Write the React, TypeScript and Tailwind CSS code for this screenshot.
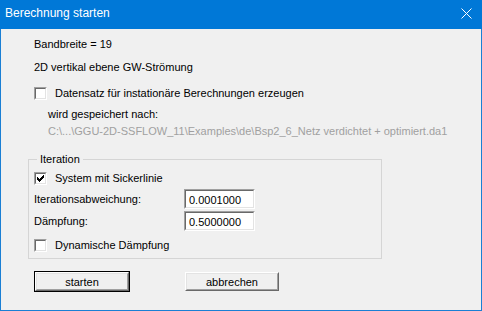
function CheckBox({ checked = false }: { checked?: boolean }) {
  return (
    <div className="w-[13px] h-[13px] shrink-0 border border-t-[#a0a0a0] border-l-[#a0a0a0] border-b-white border-r-white">
      <div className="w-full h-full border border-t-[#696969] border-l-[#696969] border-b-[#e3e3e3] border-r-[#e3e3e3] bg-white flex items-center justify-center">
        {checked && (
          <svg width="7" height="7" viewBox="0 0 7 7" shapeRendering="crispEdges">
            <path d="M0 2h1v3H0zM1 3h1v3H1zM2 4h1v3H2zM3 3h1v3H3zM4 2h1v3H4zM5 1h1v3H5zM6 0h1v3H6z" fill="#000" />
          </svg>
        )}
      </div>
    </div>
  );
}

function NumField({ value }: { value: string }) {
  return (
    <div className="w-[71px] h-[20px] border border-t-[#a0a0a0] border-l-[#a0a0a0] border-b-white border-r-white">
      <div className="w-full h-full border border-t-[#696969] border-l-[#696969] border-b-[#e3e3e3] border-r-[#e3e3e3] bg-white flex items-center pl-[3px] pt-[1px]">
        {value}
      </div>
    </div>
  );
}

function Button({ label, isDefault = false }: { label: string; isDefault?: boolean }) {
  return (
    <div className={`w-[96px] h-[21px] border ${isDefault ? 'border-[#000]' : 'border-transparent'}`}>
      <div className="w-full h-full border border-t-white border-l-white border-b-[#696969] border-r-[#696969]">
        <div className="w-full h-full border border-t-[#e3e3e3] border-l-[#e3e3e3] border-b-[#a0a0a0] border-r-[#a0a0a0] bg-[#f0f0f0] flex items-center justify-center">
          {label}
        </div>
      </div>
    </div>
  );
}

export default function App() {
  return (
    <div className="w-[482px] h-[311px] flex flex-col bg-[#1a7fd4] pl-px pr-px pb-px text-[11px] leading-[14px] text-black" style={{ fontFamily: '"Liberation Sans", Arial, sans-serif' }}>
      <div className="h-[29px] -mx-px bg-[#0078d7] flex items-center justify-between pl-[5px] pr-[10px] text-white text-[12px] shrink-0">
        <span className="-mt-[3px]">Berechnung starten</span>
        <svg width="11" height="11" viewBox="0 0 11 11" className="-mt-[3px]">
          <path d="M0.5 0.5L10.5 10.5M10.5 0.5L0.5 10.5" stroke="white" strokeWidth="1" />
        </svg>
      </div>

      <div className="flex-1 bg-[#f0f0f0] pl-[27px] pt-[8px] flex flex-col">
        <div className="pl-[6px] h-[14px] flex items-center">Bandbreite = 19</div>
        <div className="pl-[6px] h-[14px] mt-[9px] flex items-center">2D vertikal ebene GW-Strömung</div>
        <div className="pl-[6px] h-[14px] mt-[12px] flex items-center gap-[8px]">
          <CheckBox />
          <span>Datensatz für instationäre Berechnungen erzeugen</span>
        </div>
        <div className="pl-[20px] h-[14px] mt-[7px] flex items-center">wird gespeichert nach:</div>
        <div className="pl-[20px] h-[14px] mt-[3px] flex items-center text-[#a0a0a0]">
          C:\...\GGU-2D-SSFLOW_11\Examples\de\Bsp2_6_Netz verdichtet + optimiert.da1
        </div>

        <fieldset className="mt-[14px] w-[354px] border border-[#d5d5d5] pl-[5px] pb-[6px] flex flex-col">
          <legend className="ml-[3px] px-[3px] h-[14px] leading-[14px]">Iteration</legend>
          <div className="h-[14px] mt-[5px] flex items-center gap-[8px]">
            <CheckBox checked />
            <span>System mit Sickerlinie</span>
          </div>
          <div className="mt-[4px] flex items-center">
            <span className="w-[150px]">Iterationsabweichung:</span>
            <NumField value="0.0001000" />
          </div>
          <div className="mt-[2px] flex items-center">
            <span className="w-[150px]">Dämpfung:</span>
            <NumField value="0.5000000" />
          </div>
          <div className="h-[14px] mt-[7px] flex items-center gap-[8px]">
            <CheckBox />
            <span>Dynamische Dämpfung</span>
          </div>
        </fieldset>

        <div className="mt-[12px] pl-[6px] flex gap-[54px]">
          <Button label="starten" isDefault />
          <Button label="abbrechen" />
        </div>
      </div>
    </div>
  );
}
